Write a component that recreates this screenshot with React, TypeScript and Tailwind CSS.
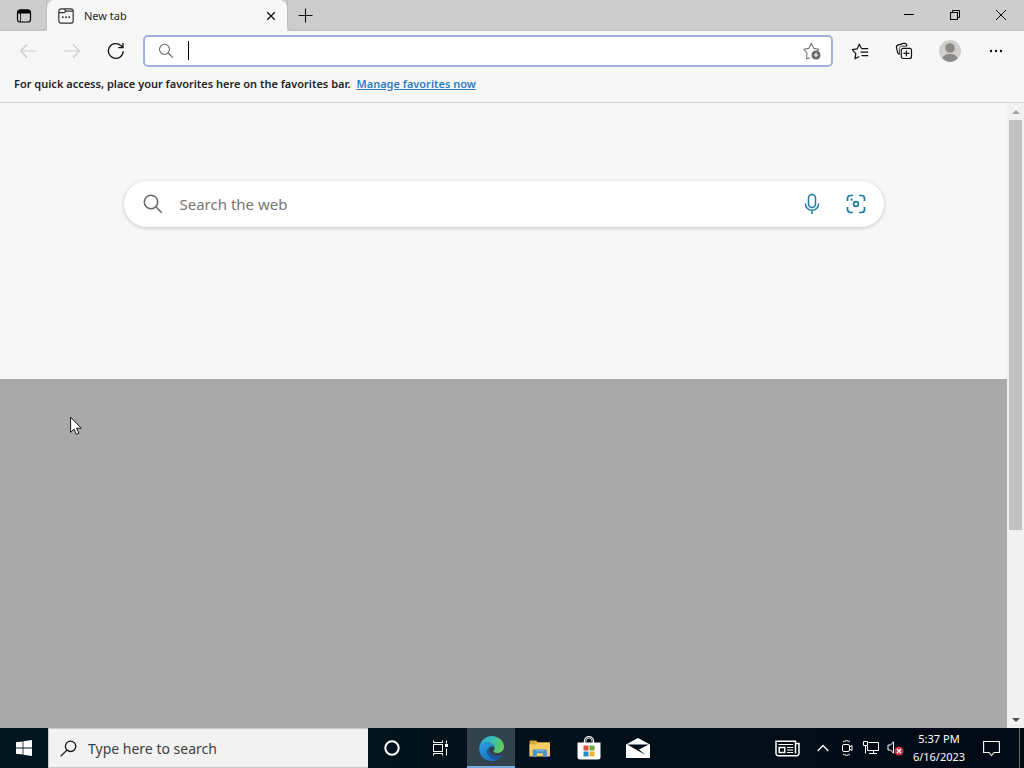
import type { ReactNode } from "react";

type IconButtonProps = {
  label: string;
  className: string;
  disabled?: boolean;
  children: ReactNode;
};

function IconButton({ label, className, disabled, children }: IconButtonProps) {
  return (
    <button
      type="button"
      aria-label={label}
      disabled={disabled}
      className={`flex shrink-0 items-center justify-center ${className}`}
    >
      {children}
    </button>
  );
}

function TabStrip() {
  return (
    <header className="flex h-[31px] shrink-0 items-stretch bg-[#cdcdcd]">
      <IconButton label="Tab actions" className="w-[47px] rounded-br-md border-r border-b border-[#bdbdbd] pt-0.5 pl-0.5">
        <svg width="16" height="16" viewBox="0 0 16 16" fill="none" stroke="#000">
          <rect x="1.5" y="2" width="13" height="12" rx="2.5" strokeWidth="1.2" />
          <path d="M2 5V4a2 2 0 0 1 2-2h8a2 2 0 0 1 2 2v1z" fill="#000" />
          <path d="M4.5 5v9" strokeWidth="0.8" />
        </svg>
      </IconButton>
      <div className="flex w-[240px] items-center rounded-t-lg bg-[#f7f7f7] pt-px pl-[11px]">
        <svg width="16" height="16" viewBox="0 0 16 16" fill="none" stroke="#333" strokeWidth="1.2">
          <rect x="0.8" y="0.8" width="14.4" height="14.4" rx="2.5" />
          <path d="M1 4.6h5.2l1.6-1.4h7" />
          <path d="M7.8 3.2L6.5 1" />
          <g fill="#222" stroke="none">
            <circle cx="4.8" cy="9.2" r="0.9" />
            <circle cx="8" cy="9.2" r="0.9" />
            <circle cx="11.2" cy="9.2" r="0.9" />
          </g>
        </svg>
        <span className="grow pl-2.5 text-[11px] text-[#222]">New tab</span>
        <IconButton label="Close tab" className="h-6 w-8">
          <svg width="10" height="10" viewBox="0 0 10 10" stroke="#111" strokeWidth="1.3">
            <path d="M1.2 1.2l7.6 7.6M8.8 1.2L1.2 8.8" />
          </svg>
        </IconButton>
      </div>
      <IconButton label="New tab" className="w-[35px] rounded-bl-md border-b border-l border-[#bdbdbd]">
        <svg width="15" height="15" viewBox="0 0 15 15" stroke="#111" strokeWidth="1.1">
          <path d="M7.5 0.5v14M0.5 7.5h14" />
        </svg>
      </IconButton>
      <div className="flex grow justify-end border-b border-[#c4c4c4]">
        <IconButton label="Minimize" className="h-[29px] w-[46px]">
          <svg width="10" height="10" viewBox="0 0 10 10" stroke="#000">
            <path d="M0 4.5h10" />
          </svg>
        </IconButton>
        <IconButton label="Restore" className="h-[29px] w-[46px]">
          <svg width="10" height="10" viewBox="0 0 10 10" fill="none" stroke="#000">
            <rect x="0.5" y="2.5" width="7" height="7" />
            <path d="M2.5 2.5v-2h7v7h-2" />
          </svg>
        </IconButton>
        <IconButton label="Close" className="h-[29px] w-[46px]">
          <svg width="10" height="10" viewBox="0 0 10 10" stroke="#000">
            <path d="M0 0l10 10M10 0L0 10" />
          </svg>
        </IconButton>
      </div>
    </header>
  );
}

function Toolbar() {
  return (
    <nav className="flex h-10 shrink-0 items-center px-1.5">
      <IconButton label="Back" disabled className="h-8 w-11">
        <svg width="18" height="16" viewBox="0 0 18 16" fill="none" stroke="#cbcbcb" strokeWidth="1.2">
          <path d="M17 8H1.5M8 1.5L1.5 8 8 14.5" />
        </svg>
      </IconButton>
      <IconButton label="Forward" disabled className="h-8 w-11">
        <svg width="18" height="16" viewBox="0 0 18 16" fill="none" stroke="#cbcbcb" strokeWidth="1.2">
          <path d="M1 8h15.5M10 1.5L16.5 8 10 14.5" />
        </svg>
      </IconButton>
      <IconButton label="Refresh" className="h-8 w-11">
        <svg width="18" height="18" viewBox="0 0 18 18" fill="none" stroke="#111" strokeWidth="1.3">
          <path d="M16.2 9.2A7.4 7.4 0 1 1 13.8 3.5L15.8 5.3M16 1v4.7h-4.7" />
        </svg>
      </IconButton>
      <div className="mr-[5px] ml-[5px] flex h-8 grow items-center rounded-[5px] border-2 border-[#9fb1dc] bg-white pl-[13px]">
        <svg width="16" height="16" viewBox="0 0 16 16" fill="none" stroke="#666" strokeWidth="1.1">
          <circle cx="6.5" cy="6.3" r="5" />
          <path d="M10.2 10l4.6 4.6" />
        </svg>
        <span aria-hidden="true" className="mb-0.5 ml-[14px] h-[19px] w-px bg-black" />
        <input aria-label="Address bar" type="text" className="min-w-0 grow bg-transparent text-xs outline-none" />
        <IconButton label="Add this page to favorites" className="h-7 w-[38px]">
          <svg width="18" height="18" viewBox="0 0 18 18" fill="none">
            <path
              d="M7.2 15.8l-3.7 1 .5-5.7L0.8 7.2l5-.8L8.3 1.3l2.6 5.1 5 .8-1.8 2.2"
              stroke="#777"
              strokeWidth="1.1"
              strokeLinejoin="round"
            />
            <circle cx="13" cy="13" r="4.5" fill="#666" />
            <path d="M13 10.7v4.6M10.7 13h4.6" stroke="#fff" strokeWidth="1.2" />
          </svg>
        </IconButton>
      </div>
      <IconButton label="Favorites" className="h-8 w-11">
        <svg width="18" height="17" viewBox="0 0 18 17" fill="none" stroke="#111" strokeWidth="1.2" strokeLinejoin="round">
          <path d="M8.2 13.4L4 15.8l.8-5.2L1.2 6.7l4.9-.8L8.3 1.2l2.2 4.4" />
          <path d="M10.5 5.6h6.7M9.5 9.1h7.7M10.5 12.6h6.7" />
        </svg>
      </IconButton>
      <IconButton label="Collections" className="h-8 w-11">
        <svg width="18" height="18" viewBox="0 0 18 18" fill="none" stroke="#111" strokeWidth="1.2" strokeLinejoin="round">
          <rect x="6.3" y="6.3" width="10.2" height="10.2" rx="2" />
          <path d="M11.4 8.5v5.8M8.5 11.4h5.8" />
          <path d="M4.4 12.4C3 12 2.6 10.8 2.3 9.4L1.5 5.6C1.2 4.2 1.9 3.2 3.4 2.8l5.2-1.4c1.6-.4 2.7.3 3.1 1.7l.2.9" />
          <path d="M4.4 12.4V6.6c0-1.5.8-2.4 2.3-2.4h5.2" strokeWidth="0.8" />
        </svg>
      </IconButton>
      <IconButton label="Profile" className="ml-0.5 h-8 w-11">
        <svg width="22" height="22" viewBox="0 0 22 22">
          <circle cx="11" cy="11" r="11" fill="#d0cfcd" />
          <circle cx="11" cy="8" r="4.8" fill="#8b8987" />
          <path d="M3.5 18.6C4 15.5 6.5 14 11 14s7 1.5 7.5 4.6A11 11 0 0 1 11 22a11 11 0 0 1-7.5-3.4z" fill="#8b8987" />
        </svg>
      </IconButton>
      <IconButton label="Settings and more" className="ml-0.5 h-8 w-11">
        <svg width="14" height="4" viewBox="0 0 14 4" fill="#111">
          <circle cx="2" cy="2" r="1.2" />
          <circle cx="7" cy="2" r="1.2" />
          <circle cx="12" cy="2" r="1.2" />
        </svg>
      </IconButton>
    </nav>
  );
}

function FavoritesBar() {
  return (
    <div className="flex h-8 shrink-0 items-center gap-1.5 border-b border-[#d2d2d2] pb-[5px] pl-3.5 text-[11px] font-semibold text-[#222]">
      <span>For quick access, place your favorites here on the favorites bar.</span>
      <a href="#favorites" className="text-[#2f7cc0] underline">
        Manage favorites now
      </a>
    </div>
  );
}

function WebSearch() {
  return (
    <section className="px-6 pt-[78px] pb-[152px]">
      <form className="mx-auto flex h-[46px] max-w-[760px] items-center rounded-full bg-white pr-[6px] pl-[18px] shadow-[0_1px_4px_rgba(0,0,0,0.2)]">
        <svg width="22" height="22" viewBox="0 0 22 22" fill="none" stroke="#666" strokeWidth="1.5">
          <circle cx="9" cy="9" r="6.7" />
          <path d="M13.8 13.8l5.9 5.9" />
        </svg>
        <input
          aria-label="Search the web"
          type="text"
          placeholder="Search the web"
          className="ml-4 min-w-0 grow bg-transparent text-[15px] outline-none placeholder:text-[#767676]"
        />
        <IconButton label="Search using voice" className="h-10 w-11">
          <svg width="18" height="22" viewBox="0 0 18 22" fill="none" stroke="#1d79a8" strokeWidth="1.5">
            <rect x="5.5" y="1.5" width="7" height="13" rx="3.5" />
            <path d="M2.500 10.500v.8a6.500 6 0 0 0 13 0v-.8M9 17.300V21" />
          </svg>
        </IconButton>
        <IconButton label="Search using an image" className="h-10 w-11">
          <svg width="20" height="20" viewBox="0 0 20 20" fill="none" stroke="#1d79a8" strokeWidth="1.7">
            <path d="M1.5 7V4.500a3 3 0 0 1 3-3H7M13 1.500h2.500a3 3 0 0 1 3 3V7M18.500 13v2.500a3 3 0 0 1-3 3H13M7 18.500H4.500a3 3 0 0 1-3-3V13" />
            <circle cx="10" cy="10" r="2.4" />
            <circle cx="5.7" cy="5.7" r="1.1" fill="#1d79a8" stroke="none" />
          </svg>
        </IconButton>
      </form>
    </section>
  );
}

function ScrollBar() {
  return (
    <div aria-hidden="true" className="flex w-[17px] shrink-0 flex-col bg-[#f1f1f1]">
      <div className="flex h-[17px] items-center justify-center">
        <svg width="8" height="4" viewBox="0 0 8 4" fill="#a0a0a0">
          <path d="M0 4l4-4 4 4z" />
        </svg>
      </div>
      <div className="grow px-0.5">
        <div className="h-[69.4%] bg-[#c1c1c1]" />
      </div>
      <div className="flex h-[17px] items-center justify-center">
        <svg width="8" height="4" viewBox="0 0 8 4" fill="#505050">
          <path d="M0 0l4 4 4-4z" />
        </svg>
      </div>
    </div>
  );
}

function MouseCursor() {
  return (
    <svg
      aria-hidden="true"
      className="absolute top-[416px] left-[70px]"
      width="13"
      height="20"
      viewBox="0 0 13 20"
      fill="#fff"
      stroke="#111"
    >
      <path d="M0.6 1.2v15.2l3.5-3.3 2.3 5.3 2.5-1.1-2.3-5.1h4.7z" />
    </svg>
  );
}

function EdgeLogo() {
  return (
    <svg width="25" height="25" viewBox="0 0 24 24">
      <defs>
        <linearGradient id="edge-top" x1="0" y1="0.3" x2="1" y2="0.5">
          <stop offset="0" stopColor="#2ea9dc" />
          <stop offset="0.5" stopColor="#37bfb4" />
          <stop offset="1" stopColor="#67cd4d" />
        </linearGradient>
        <linearGradient id="edge-left" x1="0" y1="0" x2="0.6" y2="1">
          <stop offset="0" stopColor="#2b9fdd" />
          <stop offset="1" stopColor="#1a6fc6" />
        </linearGradient>
      </defs>
      <path d="M0.3 12C0.5 8.5 3.5 6 8 6c4 0 6.5 2.3 6.5 5-1-1.4-3-1.5-4.4-.3-1.500 1.400-1.300 5 1.200 7.300 3 2.500 7 2.500 10.600.4C20 22 16 24 12 24 5.500 24 0 19 .3 12z" fill="url(#edge-left)" />
      <path d="M7.5 14.5c0 5 5 9.200 9.700 8.200 2.300-1 4-2.600 5-4.200.2-.5-.1-.7-.6-.4-6.500 3.200-12.800-1-12.300-6.100-1.200.5-1.800 1.500-1.800 2.500z" fill="#1a559f" />
      <path d="M0.3 12C.8 5 6 0 12.300 0 19 0 24 4.900 24 10c0 4-3 6.300-6.500 6.300-2.400 0-4-.9-3.600-1.700.6-.8 1.100-1.700 1.100-2.900C15 8.300 11.700 6 8 6c-3.800 0-6.800 2.300-7.700 6z" fill="url(#edge-top)" />
    </svg>
  );
}

function Taskbar() {
  return (
    <footer className="flex h-10 shrink-0 items-stretch bg-linear-to-r from-[#021820] to-[#020a16] text-white">
      <IconButton label="Start" className="w-12">
        <svg width="16" height="16" viewBox="0 0 16 16" fill="#fff">
          <path d="M0 2.3l6.6-.9v6.1H0zM7.4 1.3L16 0v7.5H7.4zM0 8.4h6.6v6.2L0 13.700zM7.4 8.4H16V16l-8.600-1.200z" />
        </svg>
      </IconButton>
      <label className="flex w-80 items-center border-y border-l border-[#c8c8c8] bg-[#f2f2f2] pl-[11px]">
        <svg width="17" height="17" viewBox="0 0 17 17" fill="none" stroke="#111" strokeWidth="1.3">
          <circle cx="10.6" cy="6.3" r="5.2" />
          <path d="M6.9 10.1L0.6 16.4" />
        </svg>
        <input
          aria-label="Type here to search"
          type="text"
          placeholder="Type here to search"
          className="ml-[11px] min-w-0 grow bg-transparent text-[14px] outline-none placeholder:text-[#404040]"
        />
      </label>
      <IconButton label="Cortana" className="w-12">
        <svg width="16" height="16" viewBox="0 0 16 16" fill="none" stroke="#fff" strokeWidth="2">
          <circle cx="8" cy="8" r="6.7" />
        </svg>
      </IconButton>
      <IconButton label="Task view" className="mr-[3px] w-12">
        <svg width="17" height="16" viewBox="0 0 17 16" fill="none" stroke="#fff">
          <rect x="1.5" y="4.5" width="9" height="7" />
          <path d="M1.5 0.5v2h9v-2M1.5 15.5v-2h9v2M14.5 0.5v3M14.5 8.5v7" />
          <rect x="13.5" y="4.5" width="2" height="2" fill="#fff" />
        </svg>
      </IconButton>
      <IconButton label="Microsoft Edge" className="w-12 border-b-2 border-[#76a9df] bg-[#33434b] pt-0.5">
        <EdgeLogo />
      </IconButton>
      <IconButton label="File Explorer" className="ml-px w-12">
        <svg width="22" height="19" viewBox="0 0 23 20">
          <path d="M0.5 2.5a1 1 0 0 1 1-1h6l1.500 1.800H21a1 1 0 0 1 1 1V18H.5z" fill="#d9a63a" />
          <path d="M0.5 5.5h7L9 4h13v14.500H0.500z" fill="#f5cd65" />
          <path d="M3.8 19v-6.500a1.500 1.500 0 0 1 1.500-1.500h12a1.500 1.500 0 0 1 1.500 1.500V19h-4.300v-4H8.100v4z" fill="#4b93c4" />
          <path d="M7 11h8.600v2H7z" fill="#74aed0" />
        </svg>
      </IconButton>
      <IconButton label="Microsoft Store" className="ml-px w-12">
        <svg width="24" height="24" viewBox="0 0 24 24" fill="none">
          <path d="M7.5 7V5A4.500 4.300 0 0 1 16.500 5V7" stroke="#fff" strokeWidth="1.3" />
          <path d="M0.5 6.500h23V21a2.500 2.500 0 0 1-2.500 2.500H3A2.500 2.500 0 0 1 .5 21z" fill="#fff" />
          <path d="M9 6.500V5a3 3 0 0 1 6 0v1.500" stroke="#bcc3c6" />
          <path d="M6.5 9.500h5v5h-5z" fill="#dc5338" />
          <path d="M12.5 9.500h5v5h-5z" fill="#75a93a" />
          <path d="M6.5 15.500h5v5h-5z" fill="#258ec8" />
          <path d="M12.5 15.500h5v5h-5z" fill="#efb42e" />
        </svg>
      </IconButton>
      <IconButton label="Mail" className="ml-px w-12">
        <svg width="24" height="20" viewBox="0 0 24 20">
          <path d="M0 6.500L12 0l12 6.500V20H0z" fill="#fff" />
          <path d="M1.2 6.500h21.600L13 11.500l6.500 5.500L9.500 11.300z" fill="#020f19" />
        </svg>
      </IconButton>
      <div className="flex grow items-stretch justify-end">
        <IconButton label="News and interests" className="w-12">
          <svg width="25" height="17" viewBox="0 0 25 17" fill="none" stroke="#fff" strokeWidth="1.5">
            <path d="M20.5 13.500V1.200H1v12a2.500 2.500 0 0 0 2.500 2.500h18a2.500 2.500 0 0 0 2.500-2.500V3.500h-3M20.500 12v1.500" />
            <rect x="4.2" y="7.5" width="5.5" height="5" />
            <path d="M3.5 4.500h14.500M12 7.500h6M12 10h6M12 12.500h6" strokeWidth="1.2" />
          </svg>
        </IconButton>
        <IconButton label="Show hidden icons" className="w-6">
          <svg width="12" height="8" viewBox="0 0 12 8" fill="none" stroke="#fff" strokeWidth="1.3">
            <path d="M0.7 7L6 1.5 11.3 7" />
          </svg>
        </IconButton>
        <IconButton label="Meet now" className="w-6">
          <svg width="14" height="16" viewBox="0 0 14 16" fill="none" stroke="#fff">
            <rect x="2.5" y="4.5" width="7" height="7" rx="1.5" />
            <path d="M9.5 7l2.500-1.500v5L9.500 9M3 2C5 .3 8 .3 10 2M3 14c2 1.700 5 1.700 7 0" />
          </svg>
        </IconButton>
        <IconButton label="Network" className="w-6">
          <svg width="16" height="14" viewBox="0 0 16 14" fill="none" stroke="#fff">
            <path d="M5.5 1.500h10v8h-11V5M10.500 9.500v3M6 12.500h8" />
            <path d="M0.5 0.500h4v4h-4zM2.500 4.500v8" />
          </svg>
        </IconButton>
        <IconButton label="Volume muted" className="w-6">
          <svg width="17" height="16" viewBox="0 0 17 16" fill="none" className="shrink-0">
            <path d="M1 5h2.500L6.500 1.800v11.400L3.500 10H1z" stroke="#fff" />
            <circle cx="12" cy="11" r="4.5" fill="#cf3642" />
            <path d="M10 9l4 4M14 9l-4 4" stroke="#fff" strokeWidth="1.2" />
          </svg>
        </IconButton>
        <button type="button" className="w-16 text-center text-[11px] leading-[18px]">
          <span className="block">5:37 PM</span>
          <span className="block">6/16/2023</span>
        </button>
        <IconButton label="Notifications" className="w-10">
          <svg width="17" height="17" viewBox="0 0 17 17" fill="none" stroke="#fff" strokeWidth="1.1">
            <path d="M0.6 1.5h15.800v11h-5.400L8.500 15.500 6 12.500H0.600z" />
          </svg>
        </IconButton>
        <button type="button" aria-label="Show desktop" className="ml-2 w-[5px] border-l border-[#68727a]" />
      </div>
    </footer>
  );
}

export default function App() {
  return (
    <div className="relative flex h-screen flex-col overflow-hidden bg-[#f7f7f7] font-['Noto_Sans','Open_Sans',sans-serif]">
      <TabStrip />
      <Toolbar />
      <FavoritesBar />
      <div className="flex min-h-0 grow">
        <main className="flex min-w-0 grow flex-col">
          <WebSearch />
          <div className="grow bg-[#a9a9a9]" />
        </main>
        <ScrollBar />
      </div>
      <Taskbar />
      <MouseCursor />
    </div>
  );
}
